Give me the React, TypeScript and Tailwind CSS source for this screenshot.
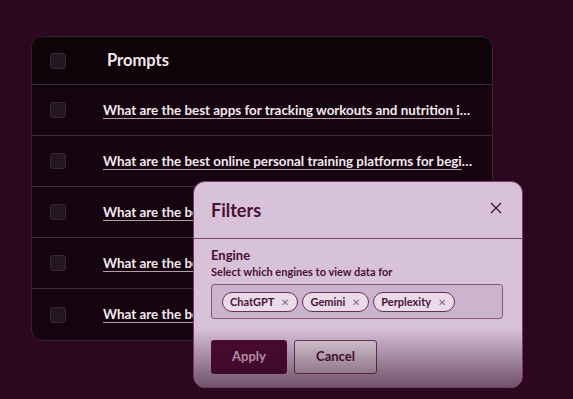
import React from "react";

const rows = [
  "What are the best apps for tracking workouts and nutrition in 2024 for beginners",
  "What are the best online personal training platforms for beginners and experts",
  "What are the best fitness trackers for runners",
  "What are the best meal planning services",
  "What are the best home gym equipment options",
];

function Checkbox() {
  return <div className="w-4 h-4 rounded-[3px] bg-[#241620] border border-[#3a2834]" />;
}

function Chip({ label }: { label: string }) {
  return (
    <div className="h-[20px] flex items-center gap-[7px] pl-[7px] pr-[8px] rounded-full border border-[#6b2e52] bg-[#e9dbe8] text-[11px] font-bold text-[#4a1236] leading-none">
      <span>{label}</span>
      <span className="text-[#8a6a80] text-[10px] font-normal">✕</span>
    </div>
  );
}

export default function App() {
  return (
    <div
      className="relative w-[573px] h-[399px] overflow-hidden bg-[#2c0820]"
      style={{ fontFamily: "Lato, 'Noto Sans', sans-serif" }}
    >
      <div className="pt-[36px] pl-[31px]">
        <div className="w-[462px] rounded-[12px] border border-[#3a2230] bg-[#150410] overflow-hidden">
          <div className="h-[48px] flex items-center bg-[#0e0308] border-b border-[#3a2a34]">
            <div className="w-[71px] pl-[18px] flex items-center">
              <Checkbox />
            </div>
            <div className="pl-[4px] text-[16.5px] font-bold text-[#f3e8ee]">Prompts</div>
          </div>
          {rows.map((r, i) => (
            <div
              key={i}
              className={
                "h-[51px] flex items-center " + (i < rows.length - 1 ? "border-b border-[#3a2a34]" : "")
              }
            >
              <div className="w-[71px] pl-[18px] flex items-center">
                <Checkbox />
              </div>
              <div className="w-[374px] truncate text-[13.4px] font-bold text-[#f3e8ee] underline decoration-[#b89aaa] underline-offset-[3px]">
                {r}
              </div>
            </div>
          ))}
        </div>
      </div>

      <div className="absolute left-[193px] top-[181px] w-[330px] h-[207px] rounded-[12px] border border-[#7a3a62] bg-[#d8c2da] overflow-hidden">
        <div className="h-[57px] flex items-center justify-between pl-[17px] pr-[20px] border-b border-[#7a4a6a]">
          <div className="text-[18px] font-bold text-[#4a1034]">Filters</div>
          <svg width="12" height="12" viewBox="0 0 12 12" className="mt-[-4px]">
            <path d="M1 1L11 11M11 1L1 11" stroke="#3a1a2e" strokeWidth="1.3" />
          </svg>
        </div>
        <div className="px-[17px] pt-[8px]">
          <div className="text-[13px] font-bold text-[#4a1034] leading-[16px]">Engine</div>
          <div className="mt-[2px] text-[11px] font-bold text-[#4a1034] leading-[14px]">
            Select which engines to view data for
          </div>
          <div className="mt-[5px] w-[292px] h-[35px] rounded-[3px] border border-[#8a5a7a] bg-[#cdb4ce] flex items-center gap-[4px] pl-[10px]">
            <Chip label="ChatGPT" />
            <Chip label="Gemini" />
            <Chip label="Perplexity" />
          </div>
          <div className="mt-[21px] flex gap-[7px]">
            <div className="w-[76px] h-[34px] rounded-[3px] bg-[#4e0a32] flex items-center justify-center text-[13px] font-bold text-[#e6c6da]">
              Apply
            </div>
            <div className="w-[83px] h-[34px] rounded-[3px] border border-[#6a3a5a] bg-[#e6d8e4] flex items-center justify-center text-[13px] font-bold text-[#4a1034]">
              Cancel
            </div>
          </div>
        </div>
        <div className="pointer-events-none absolute left-0 right-0 bottom-0 h-[60px] bg-gradient-to-b from-[#2c0820]/0 to-[#2c0820]/60" />
      </div>
    </div>
  );
}
